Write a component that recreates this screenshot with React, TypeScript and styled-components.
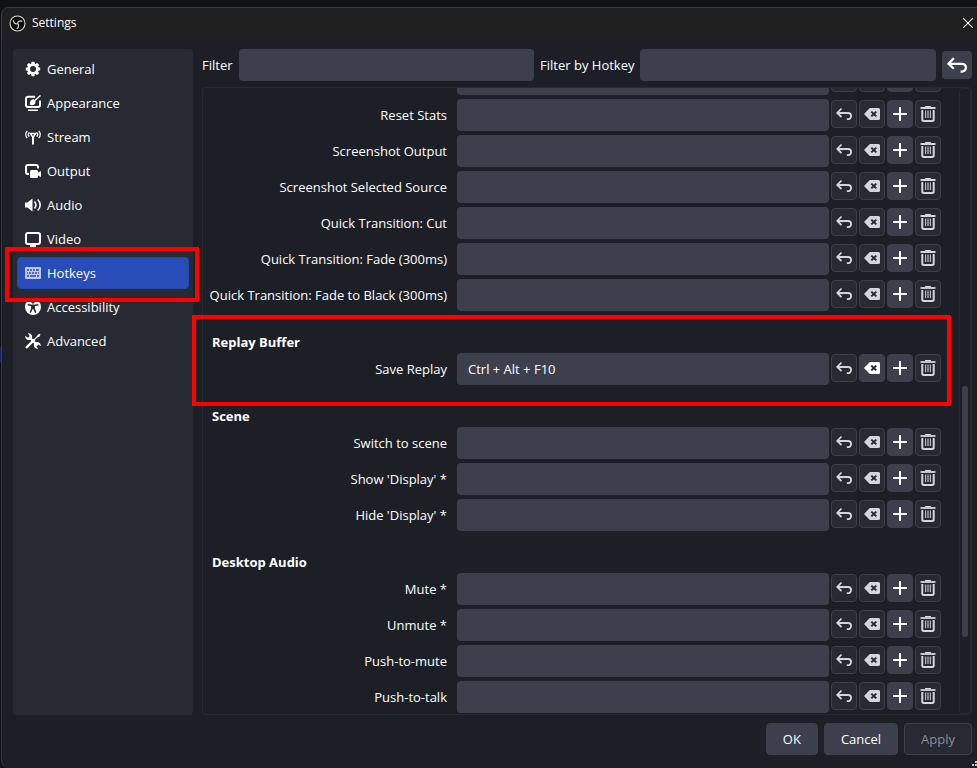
import React, { useState } from "react";
import styled, { createGlobalStyle, css } from "styled-components";

const c = {
  window: "#1d1f26",
  panel: "#272a33",
  control: "#3c404d",
  primary: "#284cb8",
  text: "#ffffff",
  soft: "#d3d6de",
  mark: "#ff0000",
};

const GlobalStyle = createGlobalStyle`
  *, *::before, *::after { box-sizing: border-box; }
  body {
    margin: 0;
    background: #101117;
    color: ${c.text};
    font: 13px/18px "Open Sans", "Noto Sans", sans-serif;
  }
  button, input { font: inherit; color: inherit; }
`;

const Desktop = styled.div`
  min-height: 100vh;
  display: flex;
  flex-direction: column;
  padding: 7px 0 0 1px;
  background: linear-gradient(#14286b, #14286b) 0 347px / 2px 15px no-repeat, #101117;
`;

const Window = styled.div`
  position: relative;
  flex: 1;
  display: flex;
  flex-direction: column;
  background: ${c.window};
  border: 1px solid #3b3b3d;
  border-width: 1px 0 0 1px;
  border-radius: 8px 0 0 8px;
  overflow: hidden;
`;

const TitleBar = styled.header`
  display: flex;
  align-items: center;
  gap: 6px;
  height: 30px;
  padding: 0 4px 0 7px;
  background: #202020;
`;

const Title = styled.h1`
  flex: 1;
  margin: 0;
  font-size: 12px;
  font-weight: 400;
`;

const CloseButton = styled.button`
  display: flex;
  padding: 0;
  border: 0;
  background: none;
`;

const Body = styled.div`
  flex: 1;
  display: flex;
  gap: 9px;
  padding: 11px 5px 8px 11px;
`;

const Sidebar = styled.nav`
  flex: none;
  display: flex;
  flex-direction: column;
  gap: 2px;
  width: 180px;
  padding: 4px;
  border-radius: 4px;
  background: ${c.panel};
`;

const highlight = css`
  content: "";
  position: absolute;
  border: 4px solid ${c.mark};
  pointer-events: none;
  z-index: 1;
`;

const NavItem = styled.button<{ $active: boolean; $marked: boolean }>`
  position: relative;
  display: flex;
  align-items: center;
  gap: 6px;
  height: 32px;
  padding: 0 7px;
  border: 1px solid ${(p) => (p.$active ? "#2347a8" : "transparent")};
  border-radius: 4px;
  background: ${(p) => (p.$active ? c.primary : "transparent")};
  text-align: left;
  svg { opacity: ${(p) => (p.$active ? 0.7 : 1)}; }
  ${(p) => p.$marked && css`
    &::after { ${highlight} inset: -11px -11px -14px -13px; }
  `}
`;

const Main = styled.main`
  flex: 1;
  min-width: 0;
  display: flex;
  flex-direction: column;
  gap: 6px;
`;

const FilterBar = styled.form`
  display: flex;
  align-items: center;
  gap: 6px;
`;

const Field = styled.input`
  flex: 1;
  min-width: 0;
  height: 32px;
  padding: 0 11px;
  border: 0;
  border-radius: 4px;
  background: ${c.control};
  outline: none;
`;

const ResetButton = styled.button`
  display: flex;
  align-items: center;
  justify-content: center;
  width: 30px;
  height: 28px;
  padding: 0;
  border: 0;
  border-radius: 4px;
  background: ${c.control};
`;

const Frame = styled.div`
  flex: 1;
  display: flex;
  border: 1px solid ${c.panel};
  border-radius: 4px;
`;

const List = styled.div`
  flex: 1;
  min-width: 0;
  display: flex;
  flex-direction: column;
  gap: 20px;
  padding: 0 18px 1px 9px;
  clip-path: inset(0 0 0 -12px);
`;

const Section = styled.section<{ $marked?: boolean; $scrolled?: boolean }>`
  position: relative;
  display: flex;
  flex-direction: column;
  gap: 4px;
  margin-top: ${(p) => (p.$scrolled ? "-25px" : "0")};
  ${(p) => p.$marked && css`
    &::after { ${highlight} inset: -16px -10px -21px -20px; }
  `}
`;

const SectionTitle = styled.h2`
  height: 22px;
  margin: 0 0 -4px;
  font-size: 13px;
  line-height: 22px;
  font-weight: 700;
`;

const Row = styled.div`
  display: flex;
  align-items: center;
  gap: 2px;
`;

const RowLabel = styled.label`
  flex: none;
  display: flex;
  justify-content: flex-end;
  width: 243px;
  padding-right: 8px;
  white-space: nowrap;
`;

const Tool = styled.button<{ $solid?: boolean }>`
  flex: none;
  display: flex;
  align-items: center;
  justify-content: center;
  width: 26px;
  height: 28px;
  margin-bottom: 2px;
  padding: 0;
  border: 1px solid ${c.control};
  border-radius: 4px;
  background: ${(p) => (p.$solid ? c.control : c.panel)};
  color: ${(p) => (p.$solid ? c.text : c.soft)};
`;

const ScrollTrack = styled.div`
  flex: none;
  width: 12px;
  padding: 297px 2px 76px;
  border: 1px solid ${c.panel};
  border-radius: 4px;
`;

const ScrollThumb = styled.div`
  height: 100%;
  border-radius: 3px;
  background: ${c.control};
`;

const Footer = styled.footer`
  display: flex;
  justify-content: flex-end;
  gap: 6px;
  padding: 0 5px 13px;
`;

const DialogButton = styled.button`
  height: 32px;
  padding: 0 16px;
  border: 1px solid ${c.control};
  border-radius: 4px;
  background: ${c.control};
  &:disabled { background: ${c.panel}; color: #8b8e96; }
`;

const ResizeGrip = styled.svg`
  position: absolute;
  right: 0;
  bottom: 0;
`;

const icon = { width: 16, height: 16, viewBox: "0 0 16 16", fill: "none", stroke: "currentColor", "aria-hidden": true } as const;

const teeth = [0, 45, 90, 135, 180, 225, 270, 315];

const NavIcons: Record<string, React.ReactNode> = {
  General: (
    <svg {...icon} stroke="none" fill="currentColor">
      {teeth.map((a) => <rect key={a} x="6.400" y="0.800" width="3.200" height="3" rx="0.600" transform={`rotate(${a} 8 8)`} />)}
      <circle cx="8" cy="8" r="4.400" fill="none" stroke="currentColor" strokeWidth="2.800" />
    </svg>
  ),
  Appearance: (
    <svg {...icon} strokeWidth="2">
      <path d="M10 1.800H3a2 2 0 0 0-2 2V10a2 2 0 0 0 2 2h10a2 2 0 0 0 2-2V5.500" />
      <path d="M3 15.200h10" strokeWidth="1.600" />
      <path d="M4.600 9.600c.6-.5.200-1.600.6-2.800C5.900 5 7.600 4.200 9 4.400L10 5.500c1.400 2.500-.3 4.700-2.700 4.700-1.200 0-2.100-.2-2.700-.6Z" fill="currentColor" stroke="none" />
      <path d="M9.500 5.800 15.500.5" strokeWidth="1.500" />
    </svg>
  ),
  Stream: (
    <svg {...icon} strokeWidth="1.200">
      <path d="M2.300 2C.2 4 .2 7 2.300 9M4.300 3.300c-1.300 1.300-1.300 3 0 4.400M13.700 2c2.100 2 2.100 5 0 7M11.700 3.300c1.300 1.300 1.300 3 0 4.400" />
      <path d="M5.300 4.500h5.400L8 8.500Z" strokeWidth="1.400" />
      <path d="M8 7v8.500" strokeWidth="2" />
    </svg>
  ),
  Output: (
    <svg {...icon} strokeWidth="2">
      <path d="M4 11H3a2 2 0 0 1-2-2V4a2 2 0 0 1 2-2h8a2 2 0 0 1 2 2v1.500" />
      <path d="M6.500 7h5A1.500 1.500 0 0 1 13 8.500v1l3-1.500v6l-3-1.500v.5A1.500 1.500 0 0 1 11.500 15h-5A1.500 1.500 0 0 1 5 13.500v-5A1.500 1.500 0 0 1 6.500 7Z" fill="currentColor" stroke="none" />
    </svg>
  ),
  Audio: (
    <svg {...icon} strokeWidth="1.600">
      <path d="M0 5.500h2.500L7.500 1.500v13l-5-4H0Z" fill="currentColor" stroke="none" />
      <path d="M9.500 4.500c1.600 2 1.600 5 0 7" />
      <path d="M12.700 2.500c3.300 3 3.300 8 0 11" />
    </svg>
  ),
  Video: (
    <svg {...icon} strokeWidth="2">
      <rect x="1" y="2" width="14" height="11" rx="2" />
      <path d="M5 15h6" strokeWidth="2" />
    </svg>
  ),
  Hotkeys: (
    <svg {...icon}>
      <rect x="0" y="2" width="16" height="12" rx="1" fill="#fff" stroke="none" />
      <g stroke={c.primary} strokeWidth="1.600">
        <path d="M2 5h2M5 5h2M8 5h2M11 5h3M2 8h1M4 8h2M7 8h2M10 8h2M13 8h1M2 11h2M5 11h6M12 11h2" />
      </g>
    </svg>
  ),
  Accessibility: (
    <svg {...icon} stroke="none">
      <circle cx="8" cy="8" r="8" fill="currentColor" />
      <g fill={c.panel} stroke={c.panel}>
        <circle cx="8" cy="3.300" r="1.400" stroke="none" />
        <path d="M3.300 5.700 6.700 6.500h2.600l3.400-.8" fill="none" strokeWidth="1.600" strokeLinecap="round" />
        <path d="M6.900 6.500v3L5.500 13M9.100 6.500v3l1.400 3.500M8 6.300v3.200" fill="none" strokeWidth="1.600" strokeLinecap="round" />
      </g>
    </svg>
  ),
  Advanced: (
    <svg {...icon}>
      <path d="M1 15 9.500 6.500" strokeWidth="2.400" />
      <path d="m9 7 4.500-4.500" strokeWidth="1.200" />
      <path d="m12 3.500.7-1.700L15 .8l.5.5-1 2.200-1.700.7Z" fill="currentColor" stroke="none" />
      <path d="m4.500 4.500 8 8" strokeWidth="2.400" />
      <path d="M2.800.2a3.700 3.700 0 0 1 4 5.100L5.300 6.800A3.700 3.700 0 0 1 .3 2.700l2.200 1.900 1.600-.3.300-1.800ZM13.200 15.800a3.700 3.700 0 0 1-4-5.100l1.500-1.500a3.700 3.700 0 0 1 5 4.100l-2.200-1.900-1.600.3-.3 1.800Z" fill="currentColor" stroke="none" />
    </svg>
  ),
};

const UndoIcon = ({ size = 16 }) => (
  <svg {...icon} width={size} height={size} strokeWidth="1.800">
    <path d="M5.500 2.500 1.200 7l4.300 4M1.200 7H12a3 3 0 0 1 0 6.200H10.800" />
  </svg>
);

const ClearIcon = () => (
  <svg {...icon} stroke="none">
    <path d="M5.800 2H14.500a1.500 1.500 0 0 1 1.500 1.500v9a1.500 1.500 0 0 1-1.500 1.500H5.800L0 8Z" fill="currentColor" />
    <path d="m7.300 5.600 5 4.800m0-4.800-5 4.800" stroke={c.panel} strokeWidth="2" />
  </svg>
);

const PlusIcon = () => (
  <svg {...icon} strokeWidth="2">
    <path d="M8 1v14M1 8h14" />
  </svg>
);

const TrashIcon = () => (
  <svg {...icon} strokeWidth="2">
    <path d="M0.500 2h15" strokeWidth="1.800" />
    <path d="M5 0.700h6" strokeWidth="1.400" />
    <path d="M2.300 4v9.500A1.500 1.500 0 0 0 3.800 15h8.400a1.500 1.500 0 0 0 1.500-1.500V4" />
    <path d="M5.700 4.500v7.500M8 4.500v7.500M10.300 4.500v7.500" strokeWidth="1" />
  </svg>
);

const Logo = () => (
  <svg width="17" height="17" viewBox="0 0 17 17" fill="none" aria-hidden="true">
    <circle cx="8.500" cy="8.500" r="7.500" fill="#0c0c0c" stroke="#d8d8d8" strokeWidth="1.100" />
    {[0, 120, 240].map((a) => (
      <path key={a} transform={`rotate(${a} 8.500 8.500)`} d="M8.500 8.500c1.700 1.200 1.600 4-.8 5.200" stroke="#d8d8d8" strokeWidth="1.200" />
    ))}
  </svg>
);

type Binding = { name: string; keys?: string };
type Group = { title?: string; marked?: boolean; items: Binding[] };

const groups: Group[] = [
  {
    items: [
      { name: "" },
      { name: "Reset Stats" },
      { name: "Screenshot Output" },
      { name: "Screenshot Selected Source" },
      { name: "Quick Transition: Cut" },
      { name: "Quick Transition: Fade (300ms)" },
      { name: "Quick Transition: Fade to Black (300ms)" },
    ],
  },
  { title: "Replay Buffer", marked: true, items: [{ name: "Save Replay", keys: "Ctrl + Alt + F10" }] },
  { title: "Scene", items: [{ name: "Switch to scene" }, { name: "Show 'Display' *" }, { name: "Hide 'Display' *" }] },
  { title: "Desktop Audio", items: [{ name: "Mute *" }, { name: "Unmute *" }, { name: "Push-to-mute" }, { name: "Push-to-talk" }] },
];

const HotkeyRow = ({ id, item }: { id: string; item: Binding }) => {
  const [keys, setKeys] = useState(item.keys ?? "");
  return (
    <Row>
      <RowLabel htmlFor={id}>{item.name}</RowLabel>
      <Field id={id} value={keys} onChange={(e) => setKeys(e.target.value)} />
      <Tool type="button" aria-label="Revert" onClick={() => setKeys(item.keys ?? "")}><UndoIcon /></Tool>
      <Tool type="button" aria-label="Clear" $solid={keys !== ""} onClick={() => setKeys("")}><ClearIcon /></Tool>
      <Tool type="button" aria-label="Add" $solid><PlusIcon /></Tool>
      <Tool type="button" aria-label="Remove"><TrashIcon /></Tool>
    </Row>
  );
};

export default function App() {
  const [page, setPage] = useState("Hotkeys");
  return (
    <Desktop>
      <GlobalStyle />
      <Window>
        <TitleBar>
          <Logo />
          <Title>Settings</Title>
          <CloseButton type="button" aria-label="Close">
            <svg width="10" height="10" viewBox="0 0 10 10" stroke="#fff" strokeWidth="1.100" aria-hidden="true">
              <path d="m0 0 10 10M10 0 0 10" />
            </svg>
          </CloseButton>
        </TitleBar>
        <Body>
          <Sidebar>
            {Object.keys(NavIcons).map((name) => (
              <NavItem key={name} type="button" $active={page === name} $marked={name === "Hotkeys"} onClick={() => setPage(name)}>
                {NavIcons[name]}
                {name}
              </NavItem>
            ))}
          </Sidebar>
          <Main>
            <FilterBar onSubmit={(e) => e.preventDefault()}>
              <label htmlFor="filter">Filter</label>
              <Field id="filter" />
              <label htmlFor="filter-hotkey">Filter by Hotkey</label>
              <Field id="filter-hotkey" />
              <ResetButton type="button" aria-label="Reset filter"><UndoIcon size={20} /></ResetButton>
            </FilterBar>
            <Frame>
              <List>
                {groups.map((g, gi) => (
                  <Section key={gi} $marked={g.marked} $scrolled={gi === 0}>
                    {g.title && <SectionTitle>{g.title}</SectionTitle>}
                    {g.items.map((item, i) => <HotkeyRow key={i} id={`key-${gi}-${i}`} item={item} />)}
                  </Section>
                ))}
              </List>
              <ScrollTrack><ScrollThumb /></ScrollTrack>
            </Frame>
          </Main>
        </Body>
        <Footer>
          <DialogButton type="button">OK</DialogButton>
          <DialogButton type="button">Cancel</DialogButton>
          <DialogButton type="button" disabled>Apply</DialogButton>
        </Footer>
        <ResizeGrip width="5" height="7" viewBox="0 0 5 7" fill="#c4c4c4" aria-hidden="true">
          <path d="M3 0h2v2H3zM0 3h2v2H0zM3 3h2v2H3z" />
        </ResizeGrip>
      </Window>
    </Desktop>
  );
}
